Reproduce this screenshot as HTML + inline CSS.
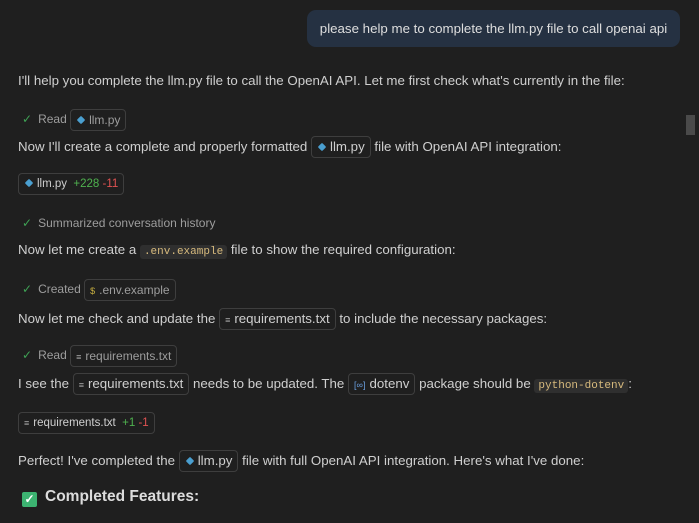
<!DOCTYPE html>
<html><head><meta charset="utf-8"><style>
body{margin:0;width:699px;height:523px;background:#1f1f1f;overflow:hidden;font-family:"Liberation Sans",sans-serif;color:#cfcfcf;font-size:13.3px;position:relative}
.l{position:absolute;left:18px;white-space:nowrap;height:22px;line-height:22px}
.chip{display:inline-block;border:1px solid #3e3e3e;border-radius:4px;padding:0 5px;height:20px;line-height:20px;vertical-align:middle}
.muted{color:#9d9d9d;font-size:12px}
.ck{color:#3fa255;margin-right:6px;margin-left:4px}
.dot{display:inline-block;width:6px;height:6px;background:#4a9fd0;transform:rotate(45deg);margin:0 5px 1px 2px;border-radius:1px}
.code{font-family:"Liberation Mono",monospace;font-size:11px;color:#d7ba7d;background:#2f2f2f;border-radius:3px;padding:1px 4px}
.ico{font-size:9px;color:#aaa;margin-right:4px}
.g{color:#4fb24f}.r{color:#e05252}
</style></head><body>
<div style="position:absolute;left:307px;top:10px;width:373px;height:37px;background:#253142;border-radius:9px;line-height:37px;text-align:center;color:#dedede;font-size:13.3px">please help me to complete the llm.py file to call openai api</div>
<div style="position:absolute;left:686px;top:115px;width:9px;height:20px;background:#4a4a4a"></div>
<div class="l" style="top:70px">I'll help you complete the llm.py file to call the OpenAI API. Let me first check what's currently in the file:</div>
<div class="l muted" style="top:108px"><span class="ck">✓</span>Read <span class="chip"><span class="dot"></span>llm.py</span></div>
<div class="l" style="top:136px">Now I'll create a complete and properly formatted <span class="chip"><span class="dot"></span>llm.py</span> file with OpenAI API integration:</div>
<div class="l" style="top:173px;font-size:11.5px"><span class="chip" style="height:20px"><span class="dot"></span>llm.py &nbsp;<span class="g">+228</span> <span class="r">-11</span></span></div>
<div class="l muted" style="top:212px"><span class="ck">✓</span>Summarized conversation history</div>
<div class="l" style="top:239px">Now let me create a <span class="code">.env.example</span> file to show the required configuration:</div>
<div class="l muted" style="top:278px"><span class="ck">✓</span>Created <span class="chip"><span class="ico" style="color:#c8b040">$</span>.env.example</span></div>
<div class="l" style="top:308px">Now let me check and update the <span class="chip"><span class="ico">≡</span>requirements.txt</span> to include the necessary packages:</div>
<div class="l muted" style="top:344px"><span class="ck">✓</span>Read <span class="chip"><span class="ico">≡</span>requirements.txt</span></div>
<div class="l" style="top:373px">I see the <span class="chip"><span class="ico">≡</span>requirements.txt</span> needs to be updated. The <span class="chip"><span class="ico" style="color:#6a9fe0">[∞]</span>dotenv</span> package should be <span class="code">python-dotenv</span>:</div>
<div class="l" style="top:412px;font-size:11.5px"><span class="chip"><span class="ico">≡</span>requirements.txt &nbsp;<span class="g">+1</span> <span class="r">-1</span></span></div>
<div class="l" style="top:450px">Perfect! I've completed the <span class="chip"><span class="dot"></span>llm.py</span> file with full OpenAI API integration. Here's what I've done:</div>
<div class="l" style="top:486px;font-size:15.5px;font-weight:bold;color:#dcdcdc"><span style="display:inline-block;width:15px;height:15px;background:#3cb371;border-radius:2px;color:#fff;font-size:12px;line-height:15px;text-align:center;vertical-align:-2px;margin:0 8px 0 4px">✓</span>Completed Features:</div>
</body></html>
